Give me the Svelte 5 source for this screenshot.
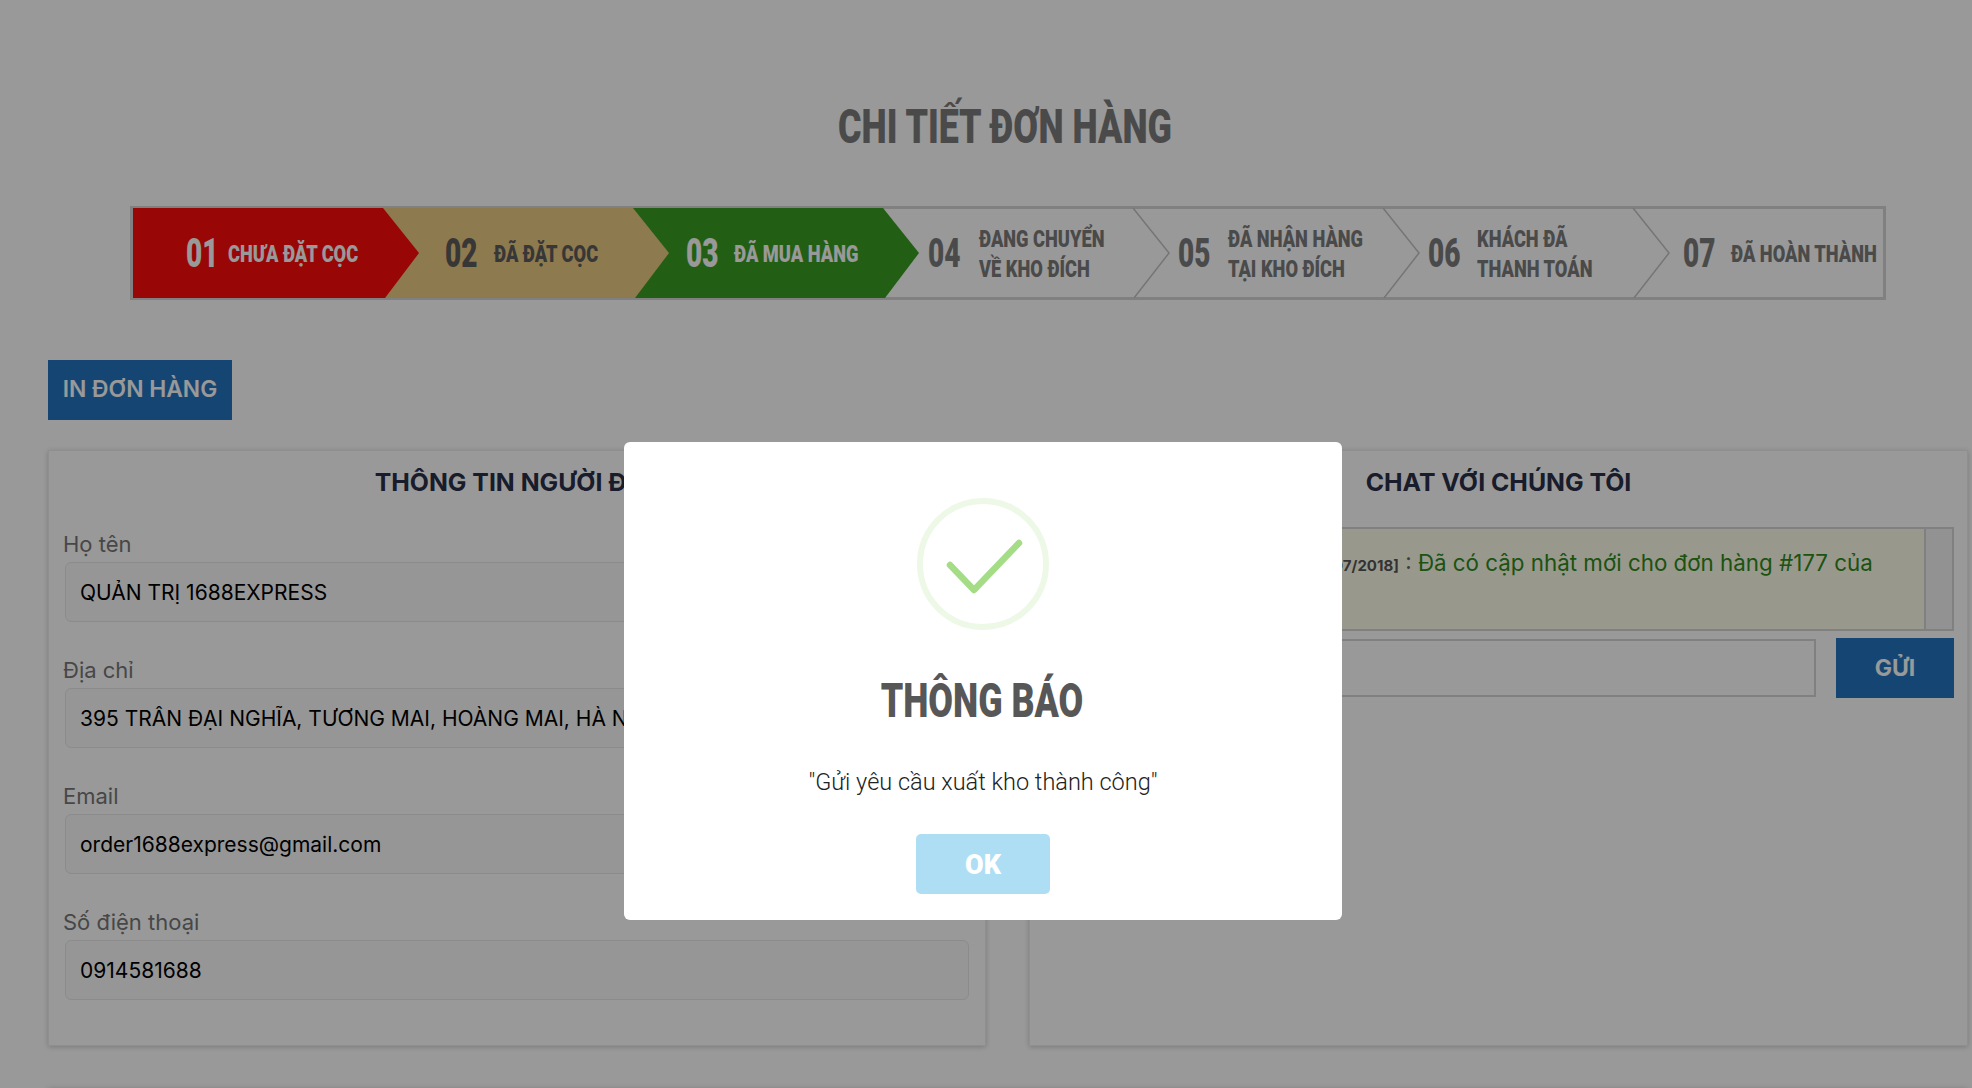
<script>
    const steps = [
        { num: "01", label: ["CHƯA ĐẶT CỌC"], state: "red", pad: 53, gap: 10 },
        { num: "02", label: ["ĐÃ ĐẶT CỌC"], state: "tan", pad: 62, gap: 17 },
        { num: "03", label: ["ĐÃ MUA HÀNG"], state: "green", pad: 53, gap: 16 },
        { num: "04", label: ["ĐANG CHUYỂN", "VỀ KHO ĐÍCH"], state: "", pad: 45, gap: 19 },
        { num: "05", label: ["ĐÃ NHẬN HÀNG", "TẠI KHO ĐÍCH"], state: "", pad: 45, gap: 18 },
        { num: "06", label: ["KHÁCH ĐÃ", "THANH TOÁN"], state: "", pad: 45, gap: 17 },
        { num: "07", label: ["ĐÃ HOÀN THÀNH"], state: "", pad: 50, gap: 16 },
    ];

    const fields = [
        { label: "Họ tên", value: "QUẢN TRỊ 1688EXPRESS" },
        { label: "Địa chỉ", value: "395 TRẤN ĐẠI NGHĨA, TƯƠNG MAI, HOÀNG MAI, HÀ NỘI" },
        { label: "Email", value: "order1688express@gmail.com" },
        { label: "Số điện thoại", value: "0914581688" },
    ];
</script>

<div class="page">
    <h1 class="page-title"><span class="cond">CHI TIẾT ĐƠN HÀNG</span></h1>

    <div class="stepper">
        {#each steps as step, i}
            <div class="step {step.state}" style="padding-left: {step.pad}px; gap: {step.gap}px; z-index: {10 - i}">
                <span class="step-num">{step.num}</span>
                <span class="step-label">
                    {#each step.label as line}
                        <span>{line}</span>
                    {/each}
                </span>
                {#if !step.state && i < steps.length - 1}
                    <svg class="chevron" width="40" height="90" viewBox="0 0 40 90" fill="none">
                        <path d="M1 0 L37 45 L2 90" stroke="#c4c4c4" stroke-width="1.5" />
                    </svg>
                {/if}
            </div>
        {/each}
    </div>

    <button class="print-btn">IN ĐƠN HÀNG</button>

    <div class="columns">
        <section class="panel">
            <h2 class="panel-title">THÔNG TIN NGƯỜI ĐẶT</h2>
            {#each fields as field}
                <div class="field">
                    <label for={field.label}>{field.label}</label>
                    <input id={field.label} value={field.value} readonly />
                </div>
            {/each}
        </section>

        <section class="panel">
            <h2 class="panel-title">CHAT VỚI CHÚNG TÔI</h2>
            <div class="chat-log">
                <div class="chat-msg">
                    <strong>[20/07/2018]</strong> : <span class="chat-text">Đã có cập nhật mới cho đơn hàng #177 của</span>
                </div>
                <div class="chat-track"></div>
            </div>
            <div class="chat-form">
                <input class="chat-input" />
                <button class="send-btn">GỬI</button>
            </div>
        </section>
    </div>

    <div class="next-card"></div>
</div>

<div class="overlay">
    <div class="modal">
        <div class="success-icon">
            <svg width="80" height="60" viewBox="0 0 80 60" fill="none">
                <path d="M7 31 L31 56 L76 9" stroke="#a5dc86" stroke-width="6.5" stroke-linecap="round" stroke-linejoin="round" />
            </svg>
        </div>
        <h2 class="modal-title"><span class="cond">THÔNG BÁO</span></h2>
        <p class="modal-text">"Gửi yêu cầu xuất kho thành công"</p>
        <button class="ok-btn">OK</button>
    </div>
</div>

<style>
    :global(body) {
        margin: 0;
        background: #fff;
        font-family: Inter, "Liberation Sans", sans-serif;
    }

    .page {
        box-sizing: border-box;
        height: 1088px;
        overflow: hidden;
        padding: 100px 4px 0 48px;
    }

    /* no condensed face is installed, so the display text is squeezed */
    .cond {
        display: inline-block;
        transform: scaleX(0.745);
        white-space: nowrap;
    }

    .page-title {
        margin: 0 0 54px;
        height: 52px;
        line-height: 54px;
        text-align: center;
        padding-right: 6px;
        font-family: Roboto, "Liberation Sans", sans-serif;
        font-size: 48px;
        font-weight: 900;
        color: #7c7c7c;
    }

    .stepper {
        display: flex;
        box-sizing: border-box;
        width: 1756px;
        height: 94px;
        margin-left: 82px;
        border: 3px solid #d6d6d6;
        font-family: Roboto, "Liberation Sans", sans-serif;
        font-weight: 900;
        color: #7c7c7c;
    }

    .step {
        position: relative;
        flex: 0 0 250px;
        min-width: 0;
        box-sizing: border-box;
        display: flex;
        align-items: center;
        height: 88px;
        padding-top: 2px;
    }

    .step.red,
    .step.tan,
    .step.green {
        flex: 0 0 286px;
        margin: -1px -36px -1px 0;
        height: 90px;
        clip-path: polygon(0 0, 250px 0, 286px 50%, 252px 100%, 0 100%);
        color: #fff;
    }

    .step.red { background: #ff0a0a; }
    .step.tan { background: #ebcb82; color: #5c5c5c; }
    .step.green { background: #399d21; }

    .step-num {
        flex: 0 0 32px;
        min-width: 0;
        font-size: 40px;
        line-height: 1;
        white-space: nowrap;
        transform: scaleX(0.7);
        transform-origin: left center;
    }

    .step-label {
        display: flex;
        flex-direction: column;
        font-size: 24px;
        line-height: 30px;
        white-space: nowrap;
        transform: scaleX(0.76);
        transform-origin: left center;
    }

    .chevron {
        position: absolute;
        top: -1px;
        left: 249px;
    }

    .print-btn {
        display: block;
        width: 184px;
        height: 60px;
        margin: 60px 0 30px;
        padding: 0 0 4px;
        border: none;
        background: #2375c0;
        color: #fff;
        font-family: Inter, "Liberation Sans", sans-serif;
        font-size: 22.8px;
        font-weight: 600;
    }

    .columns {
        display: grid;
        grid-template-columns: 938px 939px;
        gap: 43px;
    }

    .panel {
        box-sizing: border-box;
        height: 596px;
        padding: 15px 16px;
        background: #fff;
        border: 1px solid #eee;
        box-shadow: 0 1px 5px rgba(0, 0, 0, 0.2);
    }

    .panel-title {
        margin: 0 0 32px;
        height: 32px;
        line-height: 32px;
        text-align: center;
        font-size: 24.8px;
        font-weight: 700;
        color: #2a2f48;
    }

    .field {
        margin-bottom: 34px;
    }

    .field label {
        display: block;
        height: 32px;
        margin-left: -2px;
        line-height: 28px;
        font-size: 22px;
        color: #777;
    }

    .field input {
        display: block;
        box-sizing: border-box;
        width: 100%;
        height: 60px;
        padding: 0 14px;
        border: 1px solid #e8e8e8;
        border-radius: 6px;
        background: #fafafa;
        font-family: inherit;
        font-size: 21px;
        color: #000;
    }

    .chat-log {
        box-sizing: border-box;
        display: flex;
        height: 104px;
        margin: -3px -3px 0 0;
        border: 2px solid #d6d6d6;
    }

    .chat-msg {
        flex: 1;
        padding: 18px 0 0 254px;
        background: #fffee9;
        border-right: 2px solid #d6d6d6;
        font-size: 22.35px;
        line-height: 32px;
        color: #666;
        white-space: nowrap;
    }

    .chat-msg strong {
        font-size: 15px;
        color: #555;
    }

    .chat-text {
        color: #2f8a1c;
    }

    .chat-track {
        width: 26px;
        background: #f4f4f4;
    }

    .chat-form {
        display: flex;
        gap: 20px;
        margin: 7px -3px 0 0;
    }

    .chat-input {
        flex: 0 0 770px;
        box-sizing: border-box;
        height: 58px;
        margin-top: 1px;
        border: 2px solid #d6d6d6;
        background: #fff;
    }

    .send-btn {
        width: 118px;
        height: 60px;
        padding: 0;
        border: none;
        background: #2375c0;
        color: #fff;
        font-family: Inter, "Liberation Sans", sans-serif;
        font-size: 23px;
        font-weight: 700;
    }

    .next-card {
        height: 40px;
        margin-top: 44px;
        box-shadow: 0 -1px 6px rgba(0, 0, 0, 0.2);
    }

    .overlay {
        position: fixed;
        inset: 0;
        z-index: 100;
        display: flex;
        justify-content: center;
        align-items: flex-start;
        padding: 442px 6px 0 0;
        box-sizing: border-box;
        background: rgba(0, 0, 0, 0.4);
    }

    .modal {
        box-sizing: border-box;
        width: 718px;
        height: 478px;
        padding-top: 56px;
        background: #fff;
        border-radius: 6px;
        display: flex;
        flex-direction: column;
        align-items: center;
    }

    .success-icon {
        box-sizing: border-box;
        width: 132px;
        height: 132px;
        margin-right: 1px;
        border: 6px solid rgba(165, 220, 134, 0.2);
        border-radius: 50%;
        display: flex;
        align-items: center;
        justify-content: center;
    }

    .modal-title {
        margin: 40px 3px 0 0;
        height: 60px;
        line-height: 62px;
        font-family: Roboto, "Liberation Sans", sans-serif;
        font-size: 48px;
        font-weight: 900;
        color: #575757;
    }

    .modal-text {
        margin: 34px 0 0;
        height: 36px;
        line-height: 36px;
        font-family: Roboto, "Liberation Sans", sans-serif;
        font-size: 23.5px;
        font-weight: 300;
        color: #222;
    }

    .ok-btn {
        width: 134px;
        height: 60px;
        margin-top: 34px;
        padding: 2px 0 0;
        border: none;
        border-radius: 5px;
        background: #aedef4;
        color: #fff;
        font-family: Roboto, "Liberation Sans", sans-serif;
        font-size: 27px;
        font-weight: 900;
    }
</style>
